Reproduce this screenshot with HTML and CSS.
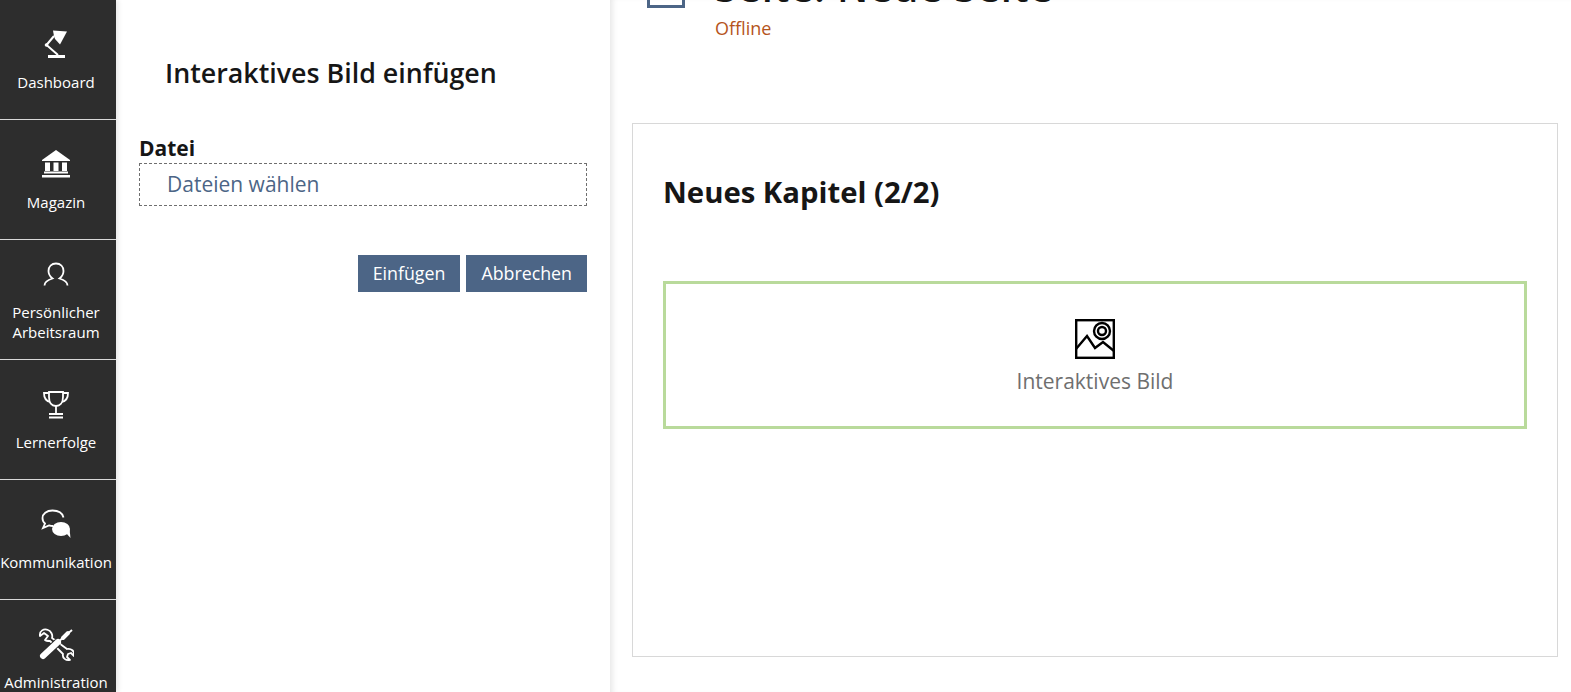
FILE: index.html
```html
<!DOCTYPE html>
<html lang="de">
<head>
    <meta charset="UTF-8">
    <meta name="viewport" content="width=device-width, initial-scale=1.0">
    <title>Interaktives Bild einfügen</title>
    <link rel="stylesheet" href="styles.css">
</head>
<body>
    <nav class="mainbar">
        <a class="mainbar-item">
            <svg class="mainbar-icon" viewBox="0 0 36 36"><path d="M10 28h17v3H10z" fill="#fff"/><path d="M20 28 8.500 18 16 9" fill="none" stroke="#fff" stroke-width="2"/><circle cx="8.500" cy="18" r="1.800" fill="#fff"/><path d="M15 3.500l14 1-7 13-5-5.500-1-3z" fill="#fff"/></svg>
            <span>Dashboard</span>
        </a>
        <a class="mainbar-item">
            <svg class="mainbar-icon" viewBox="0 0 36 36"><path d="M18 3 4 13v1h28v-1z" fill="#fff"/><path d="M7 15.500h5V24H7zM15.500 15.500h5V24h-5zM24 15.500h5V24h-5zM6 24.500h24v2H6zM4 28h28v2.500H4z" fill="#fff"/></svg>
            <span>Magazin</span>
        </a>
        <a class="mainbar-item">
            <svg class="mainbar-icon" viewBox="0 0 36 36"><path d="M6.500 28.500c0-4 3-5.500 8-7-2.500-2-4-4.500-4-7.500 0-4.500 3-7.500 7.500-7.500s7.500 3 7.500 7.500c0 3-1.500 5.500-4 7.500 5 1.500 8 3 8 7" fill="none" stroke="#fff" stroke-width="1.800"/></svg>
            <span>Persönlicher Arbeitsraum</span>
        </a>
        <a class="mainbar-item">
            <svg class="mainbar-icon" viewBox="0 0 36 36" fill="none" stroke="#fff" stroke-width="1.800"><path d="M11 5h14v5c0 6-3 9-7 9s-7-3-7-9z"/><path d="M11 6H6c0 5 2 8 6 9M25 6h5c0 5-2 8-6 9M18 19v8M11 27h14M11 30.500h14"/></svg>
            <span>Lernerfolge</span>
        </a>
        <a class="mainbar-item">
            <svg class="mainbar-icon" viewBox="0 0 36 36"><path d="M15 19c-2 0-3-.3-4-.6L5 21l2-4.500C5 15 4.500 13 4.500 11c0-4 4-7.500 10-7.500s10 3 11 7" fill="none" stroke="#fff" stroke-width="1.800"/><ellipse cx="23" cy="22" rx="9" ry="7" fill="#fff"/><path d="M28 26l4.500 5-1-9z" fill="#fff"/></svg>
            <span>Kommunikation</span>
        </a>
        <a class="mainbar-item">
            <svg class="mainbar-icon" viewBox="0 0 36 36"><path d="M10 3C6 1 1 4 2 9l4-3 4 3-3 4c1 1 3 1 5 1l13 13c-1 4 3 7 7 6l-3-3 1-3 3-1 3 3c1-5-3-8-7-7L14 11c1-3-1-7-4-8z" fill="#2d2d2d" stroke="#fff" stroke-width="1.800" stroke-linejoin="round"/><path d="M5 29 20 15" stroke="#2d2d2d" stroke-width="8"/><path d="M5 29 20 15" stroke="#fff" stroke-width="6" stroke-linecap="round"/><path d="M20 15 34 3" stroke="#fff" stroke-width="2"/><path d="M25 11l5-5" stroke="#fff" stroke-width="4" stroke-linecap="round"/></svg>
            <span>Administration</span>
        </a>
    </nav>

    <aside class="slate">
        <h2 class="slate-title">Interaktives Bild einfügen</h2>
        <form class="form">
            <label class="form-label">Datei</label>
            <div class="dropzone">Dateien wählen</div>
            <div class="form-buttons">
                <button type="button" class="btn">Einfügen</button>
                <button type="button" class="btn">Abbrechen</button>
            </div>
        </form>
    </aside>

    <main class="content">
        <header class="page-head">
            <span class="page-icon"></span>
            <div class="page-head-text">
                <h1 class="page-title">Seite: Neue Seite</h1>
                <div class="page-status">Offline</div>
            </div>
        </header>
        <section class="panel">
            <h2 class="panel-title">Neues Kapitel (2/2)</h2>
            <div class="placeholder">
                <svg class="placeholder-icon" viewBox="0 0 40 40" fill="none" stroke="#000" stroke-width="2.400"><rect x="1.200" y="1.200" width="37.600" height="37.600"/><path d="M1 30 12 17l8 12 8-6 11 9"/><circle cx="27" cy="12" r="8"/><circle cx="27" cy="12" r="4"/></svg>
                <span>Interaktives Bild</span>
            </div>
        </section>
    </main>
</body>
</html>
```

FILE: styles.css
```css
* { box-sizing: border-box; margin: 0; font-family: 'Open Sans', sans-serif; }
html, body { height: 100%; overflow: hidden; }
body { display: flex; background: #fff; color: #161616; }

/* Main bar */
.mainbar { width: 116px; flex: none; background: #2d2d2d; color: #fff; box-shadow: 2px 0 5px rgba(0, 0, 0, 0.1); }
.mainbar-item {
    display: flex; flex-direction: column; align-items: center; justify-content: center;
    height: 120px; padding: 0 4px 1px 0; border-bottom: 1px solid #d8d8d8;
    font-size: 15px; line-height: 20px; text-align: center;
}
.mainbar-icon { width: 36px; height: 36px; margin-bottom: 9px; flex: none; }

/* Slate */
.slate { width: 494px; flex: none; padding: 54px 23px 0; }
.slate-title { font-size: 26.8px; font-weight: 600; line-height: 38px; padding-left: 26px; margin-bottom: 43px; }
.form-label { display: block; font-size: 21px; font-weight: 700; line-height: 27px; }
.dropzone {
    height: 43px; padding-left: 27px; border: 1px dashed #6f6f6f;
    color: #4c6586; font-size: 21px; line-height: 40px; margin-top: 1px;
}
.form-buttons { display: flex; justify-content: flex-end; gap: 6px; margin-top: 49px; }
.btn {
    height: 37px; padding: 0 14px 2px; border: 1px solid #4c6586; background: #4c6586;
    color: #fff; font-size: 17.8px;
}

/* Content */
.content { flex: 1; padding: 0 13px 0 22px; box-shadow: inset 6px 0 6px -4px #e4e4e4; }
.page-head { display: flex; height: 123px; padding-left: 15px; }
.page-icon { width: 38px; height: 8px; border: 3px solid #4c6586; border-top: 0; flex: none; }
.page-head-text { margin-left: 30px; margin-top: -33px; }
.page-title { font-size: 40px; font-weight: 600; line-height: 40px; letter-spacing: 0.8px; white-space: nowrap; }
.page-status { color: #b5541c; font-size: 18px; line-height: 24px; margin-top: 9px; }

.panel { height: 534px; border: 1px solid #d8d8d8; padding: 49px 30px 0; }
.panel-title { font-size: 29.3px; font-weight: 700; line-height: 38px; margin-bottom: 70px; }
.placeholder {
    display: flex; flex-direction: column; align-items: center;
    height: 148px; padding-top: 35px; border: 3px solid #b9da9b;
    color: #6f6f6f; font-size: 21px; line-height: 28px;
}
.placeholder-icon { width: 40px; height: 40px; margin-bottom: 8px; }
```
